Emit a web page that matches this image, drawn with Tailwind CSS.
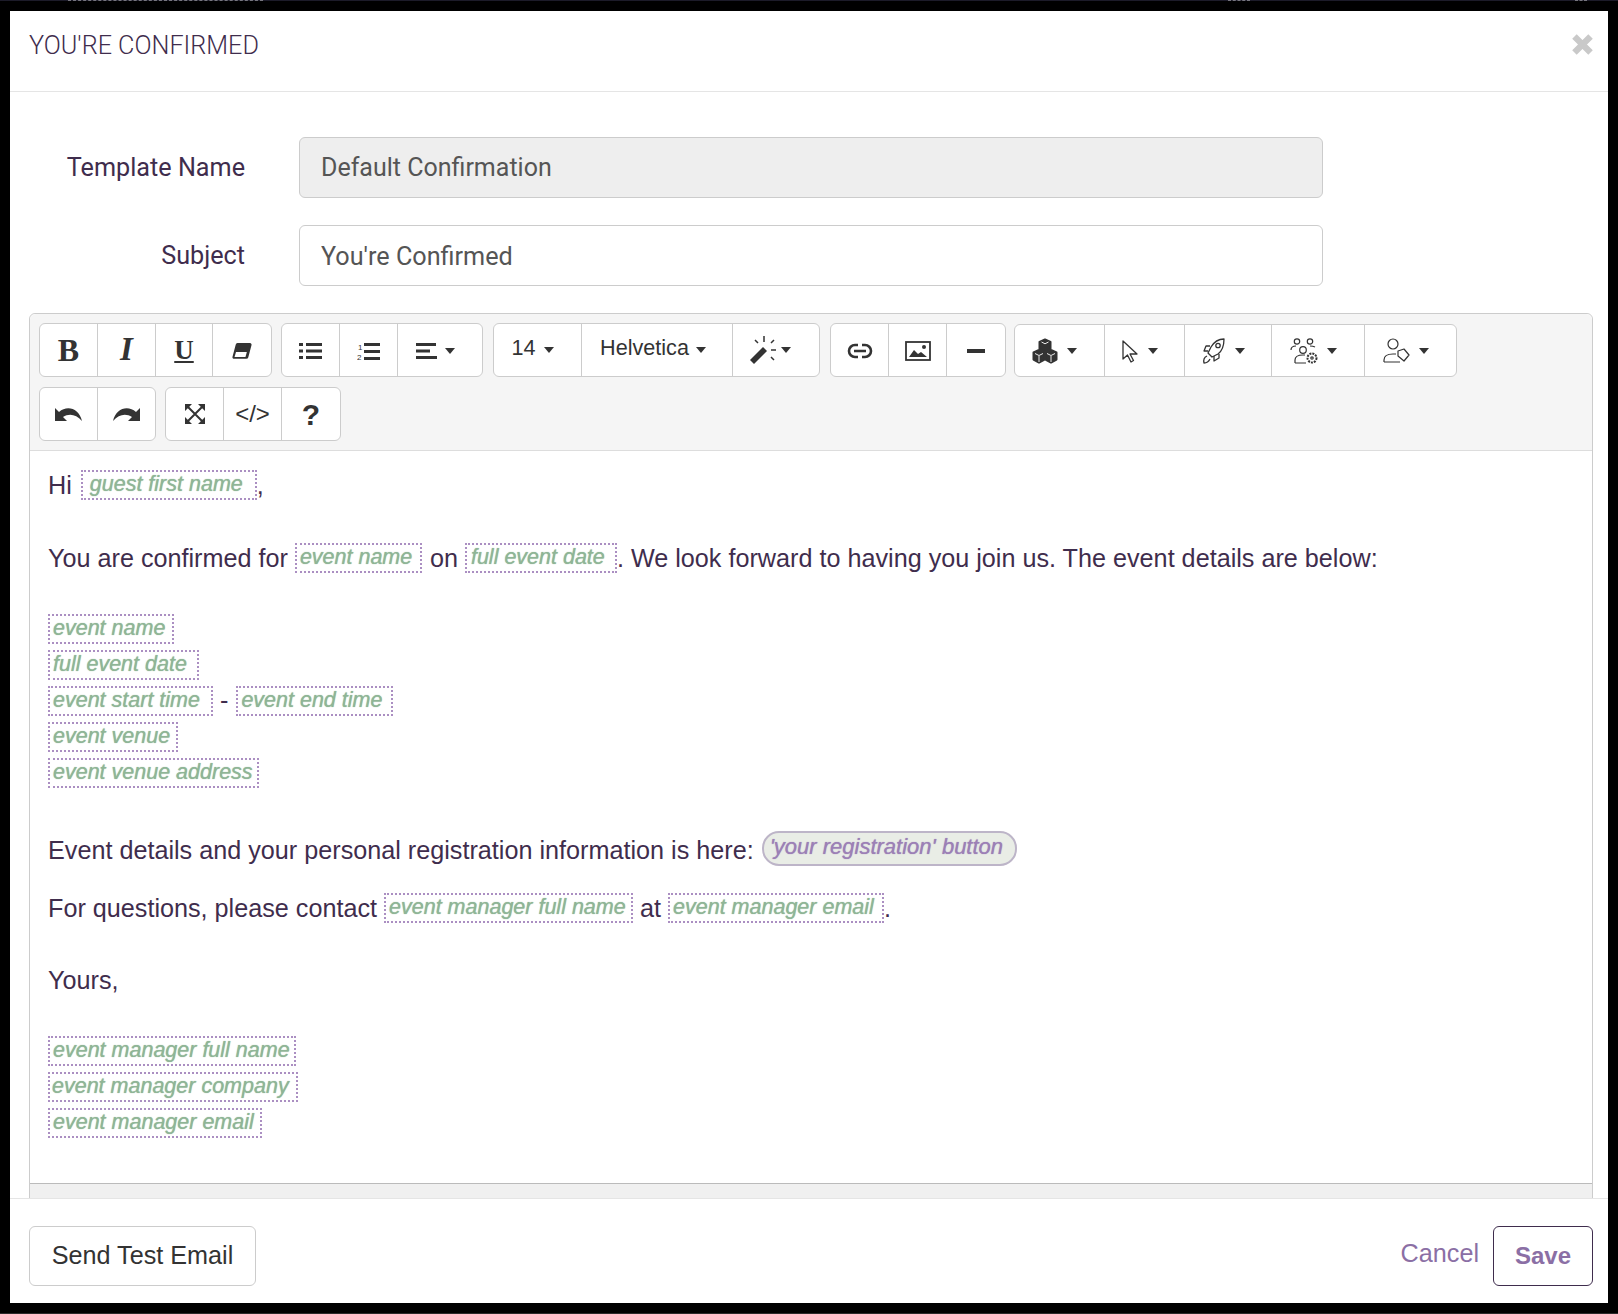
<!DOCTYPE html>
<html lang="en">
<head>
  <meta charset="UTF-8" />
  <title>You're Confirmed</title>
  <script src="https://cdn.jsdelivr.net/npm/@tailwindcss/browser@4"></script>
</head>
<body class="bg-black font-['Liberation_Sans',sans-serif] text-[#3f2d4d]">
  <div class="w-[1618px] h-[1314px] overflow-hidden flex flex-col">
    <!-- page behind the modal, only its last row of pixels shows -->
    <div class="h-[11px] shrink-0">
      <div class="h-px bg-[#1c1b29] flex">
        <span class="ml-[68px] w-[195px] border-t border-dashed border-[#77767f]"></span>
        <span class="ml-[965px] w-[22px] border-t border-dashed border-[#77767f]"></span>
        <span class="ml-[325px] w-[12px] border-t border-dashed border-[#77767f]"></span>
      </div>
    </div>

    <div class="mx-[10px] h-[1292px] shrink-0 bg-white flex flex-col">
      <!-- header -->
      <div class="h-[81px] shrink-0 border-b border-[#e5e5e5] flex items-start justify-between pl-[19px] pr-[14px] pt-[19px]">
        <h4 class="font-['Roboto',sans-serif] font-light text-[25.2px] leading-[32px] text-[#3f2d4d]">YOU'RE CONFIRMED</h4>
        <svg class="w-[23px] h-[23px] mt-[3px]" viewBox="0 0 20 20"><path d="M3 3 17 17M17 3 3 17" stroke="#c9c9c9" stroke-width="5.500" /></svg>
      </div>

      <!-- body -->
      <div class="flex-1 overflow-hidden px-[19px] pt-[45px]">
        <div class="flex items-center h-[61px]">
          <label class="w-[216px] pt-[1px] text-right font-['Roboto',sans-serif] text-[25.2px]">Template Name</label>
          <input value="Default Confirmation" disabled class="ml-[54px] w-[1024px] h-[61px] px-[21px] rounded-[6px] border border-[#ccc] bg-[#eee] text-[#555] text-[25px] font-['Roboto',sans-serif]" />
        </div>
        <div class="flex items-center h-[61px] mt-[27px]">
          <label class="w-[216px] pt-[1px] text-right font-['Roboto',sans-serif] text-[25.2px]">Subject</label>
          <input value="You're Confirmed" class="ml-[54px] w-[1024px] h-[61px] px-[21px] pt-[1px] rounded-[6px] border border-[#ccc] bg-white text-[#555] text-[25.2px] font-['Roboto',sans-serif]" />
        </div>

        <!-- editor -->
        <div class="mt-[27px] w-[1564px] border border-[#ccc] rounded-[6px]">
          <div class="h-[137px] bg-[#f5f5f5] border-b border-[#ddd] rounded-t-[6px] pl-[9px] pt-[9px]">
            <div class="flex gap-[10px] h-[54px] text-[#333]">
              <div class="flex h-[54px] w-[233px] pt-[2px] bg-white border border-[#ccc] rounded-[6px] divide-x divide-[#ccc]">
                <div class="w-[58px] -mt-[2px] flex items-center justify-center"><span class="font-['Liberation_Serif',serif] font-bold text-[32px] text-[#333]">B</span></div>
                <div class="w-[58px] -mt-[2px] flex items-center justify-center"><span class="font-['Liberation_Serif',serif] font-bold italic text-[33px] text-[#333]">I</span></div>
                <div class="w-[57px] -mt-[2px] flex items-center justify-center"><span class="font-['Liberation_Serif',serif] font-bold text-[27px] underline underline-offset-2 text-[#333]">U</span></div>
                <div class="flex-1 -mt-[2px] pt-[2px] flex items-center justify-center">
                  <svg class="w-[20px] h-[19px]" viewBox="0 0 19 18"><path d="M6 1h11a1.500 1.500 0 0 1 1.500 2l-3 11.500a2 2 0 0 1-2 1.500H2a1.500 1.500 0 0 1-1.500-2l3-11.500A2 2 0 0 1 6 1z" fill="#333" /><path d="M3.800 9.500 2.400 14.300h10.400l1.300-4.800z" fill="#fff" /></svg>
                </div>
              </div>
              <div class="flex h-[54px] w-[202px] -ml-[1px] bg-white border border-[#ccc] rounded-[6px] divide-x divide-[#ccc]">
                <div class="w-[58px] pt-[2px] flex items-center justify-center">
                  <svg class="w-[23px] h-[18px]" viewBox="0 0 23 18" fill="#333"><path d="M0 1h4v3H0zM7 1h16v3H7zM0 7.500h4v3H0zM7 7.500h16v3H7zM0 14h4v3H0zM7 14h16v3H7z" /></svg>
                </div>
                <div class="w-[58px] pt-[2px] flex items-center justify-center">
                  <svg class="w-[23px] h-[19px]" viewBox="0 0 23 19" fill="#333"><path d="M7 1h16v3H7zM7 8h16v3H7zM7 15h16v3H7z" /><text x="1" y="8" font-size="8" font-family="Liberation Sans">1</text><text x="0" y="18" font-size="8" font-family="Liberation Sans">2</text></svg>
                </div>
                <div class="flex-1 pt-[2px] flex items-center justify-center gap-[8px] pr-[10px]">
                  <svg class="w-[21px] h-[16px]" viewBox="0 0 21 16" fill="#333"><path d="M0 0h20v3H0zM0 6.500h14v3H0zM0 13h21v3H0z" /></svg>
                  <span class="w-0 h-0 border-x-[5px] border-x-transparent border-t-[6px] border-t-[#333]"></span>
                </div>
              </div>
              <div class="flex h-[54px] w-[327px] bg-white border border-[#ccc] rounded-[6px] divide-x divide-[#ccc] text-[21.6px] text-[#333]">
                <div class="w-[88px] flex items-center justify-center gap-[8px] pr-[10px]"><span class="-mt-[3px]">14</span><span class="w-0 h-0 border-x-[5px] border-x-transparent border-t-[6px] border-t-[#333]"></span></div>
                <div class="w-[151px] flex items-center justify-center gap-[7px] pr-[8px]"><span class="-mt-[3px]">Helvetica</span><span class="w-0 h-0 border-x-[5px] border-x-transparent border-t-[6px] border-t-[#333]"></span></div>
                <div class="flex-1 flex items-center justify-center gap-[2px] pr-[12px]">
                  <svg class="w-[29px] h-[28px]" viewBox="0 0 29 28"><path d="M0 24 13 11l4 4L4 28z" fill="#333" /><path d="M14 0v6M5 4l3 3M24 4l-3 3M21 14h5M21 21l3 3" stroke="#333" stroke-width="1.500" fill="none" /></svg>
                  <span class="w-0 h-0 border-x-[5px] border-x-transparent border-t-[6px] border-t-[#333]"></span>
                </div>
              </div>
              <div class="flex h-[54px] w-[176px] bg-white border border-[#ccc] rounded-[6px] divide-x divide-[#ccc]">
                <div class="w-[58px] pt-[2px] flex items-center justify-center">
                  <svg class="w-[26px] h-[16px]" viewBox="0 0 26 16" fill="none" stroke="#333" stroke-width="2.600"><path d="M11 2H8a6 6 0 0 0 0 12h3M15 2h3a6 6 0 0 1 0 12h-3M7 8h12" /></svg>
                </div>
                <div class="w-[58px] pt-[2px] flex items-center justify-center">
                  <svg class="w-[26px] h-[20px]" viewBox="0 0 26 20"><rect x="1" y="1" width="24" height="18" fill="none" stroke="#333" stroke-width="1.800" /><path d="M4 16l5-7 4 4 3-2 6 5z" fill="#333" /><circle cx="19" cy="6" r="2" fill="#333" /></svg>
                </div>
                <div class="flex-1 pt-[2px] flex items-center justify-center">
                  <span class="w-[18px] h-[4px] bg-[#333]"></span>
                </div>
              </div>
              <div class="flex h-[53px] w-[443px] mt-[1px] -ml-[2px] bg-white border border-[#ccc] rounded-[6px] divide-x divide-[#ccc]">
                <div class="w-[90px] flex items-center justify-center gap-[9px] pr-[10px]">
                  <svg class="w-[26px] h-[26px]" viewBox="0 0 26 26"><path d="M13 1.500l5.500 2.500v7l-5.500 2.500-5.500-2.500V4z M7 12l5.500 2.500v7L7 24.500 1.500 21.500v-7z M19 12l5.500 2.500v7L19 24.500l-5.500-3v-7z" fill="#333" stroke="#333" stroke-width="2" stroke-linejoin="round" /><path d="M9.500 4 13 5.800 16.500 4M7 18v6M19 18v6M3 15.500 7 17.500 11 15.500M15 15.500 19 17.500 23 15.500" stroke="#fff" stroke-width="0.900" fill="none" /></svg>
                  <span class="w-0 h-0 border-x-[5px] border-x-transparent border-t-[6px] border-t-[#333]"></span>
                </div>
                <div class="w-[80px] flex items-center justify-center gap-[9px] pr-[10px]">
                  <svg class="w-[18px] h-[24px]" viewBox="0 0 18 24" fill="none" stroke="#333" stroke-width="1.300" stroke-linejoin="round"><path d="M2 2v18l4.500-4 3.500 7 2.500-1.500L9 15h7z" /></svg>
                  <span class="w-0 h-0 border-x-[5px] border-x-transparent border-t-[6px] border-t-[#333]"></span>
                </div>
                <div class="w-[87px] flex items-center justify-center gap-[9px] pr-[10px]">
                  <svg class="w-[24px] h-[26px]" viewBox="0 0 24 26" fill="none" stroke="#333" stroke-width="1.300" stroke-linejoin="round"><path d="M22 1c-6 0-10 3-13 8l-3 6 4 4 6-3c4-3 6-8 6-15z" /><circle cx="16" cy="7.500" r="2.200" /><path d="M8 8H4L2 13h4M17 16v4l-5 3v-5M5 18c-2 1-4 3-3 7 3 0 5-2 6-4" /></svg>
                  <span class="w-0 h-0 border-x-[5px] border-x-transparent border-t-[6px] border-t-[#333]"></span>
                </div>
                <div class="w-[93px] flex items-center justify-center gap-[9px] pr-[10px]">
                  <svg class="w-[28px] h-[26px]" viewBox="0 0 28 26" fill="none" stroke="#333" stroke-width="1.200"><circle cx="7" cy="3.500" r="2.700" /><circle cx="20" cy="3.500" r="2.700" /><circle cx="13" cy="12" r="3.300" /><path d="M1 12c0-3 2-4 5-4M25 9c-2-1-3-1-5-1M5 25v-3c0-3 3-5 8-5h2M5 25h11" /><circle cx="22" cy="20" r="4.500" stroke-width="2" stroke-dasharray="2 1" /><circle cx="22" cy="20" r="1.200" /></svg>
                  <span class="w-0 h-0 border-x-[5px] border-x-transparent border-t-[6px] border-t-[#333]"></span>
                </div>
                <div class="flex-1 flex items-center justify-center gap-[9px] pr-[10px]">
                  <svg class="w-[27px] h-[25px]" viewBox="0 0 27 25" fill="none" stroke="#333" stroke-width="1.200" stroke-linejoin="round"><circle cx="10" cy="6" r="5" /><path d="M1 24v-2c0-4 4-6 9-6h3M1 24h16" /><path d="M15 13l6-2 5 6-5 6-6-5z" /></svg>
                  <span class="w-0 h-0 border-x-[5px] border-x-transparent border-t-[6px] border-t-[#333]"></span>
                </div>
              </div>
            </div>
            <div class="flex gap-[9px] h-[54px] mt-[10px]">
              <div class="flex w-[117px] bg-white border border-[#ccc] rounded-[6px] divide-x divide-[#ccc]">
                <div class="w-[58px] flex items-center justify-center">
                  <svg class="w-[27px] h-[15px]" viewBox="0 0 27 15" fill="#333"><path d="M0 1v13h12L8 10c6-4 13-3 19 4C24 1 12-2 4 5z" /></svg>
                </div>
                <div class="flex-1 flex items-center justify-center">
                  <svg class="w-[27px] h-[15px]" viewBox="0 0 27 15" fill="#333"><path d="M27 1v13H15l4-4C13 6 6 7 0 14 3 1 15-2 23 5z" /></svg>
                </div>
              </div>
              <div class="flex w-[176px] bg-white border border-[#ccc] rounded-[6px] divide-x divide-[#ccc]">
                <div class="w-[58px] flex items-center justify-center">
                  <svg class="w-[20px] h-[20px]" viewBox="0 0 20 20" fill="#333"><path d="M0 0h7L0 7zM20 0v7L13 0zM0 20v-7l7 7zM20 20h-7l7-7z" /><path d="M3 3 17 17M17 3 3 17" stroke="#333" stroke-width="2" /></svg>
                </div>
                <div class="w-[58px] flex items-center justify-center text-[24px] text-[#333]">&lt;/&gt;</div>
                <div class="flex-1 flex items-center justify-center font-bold text-[30px] text-[#333]">?</div>
              </div>
            </div>
          </div>

          <!-- message -->
          <div class="h-[732px] px-[18px] pt-[17px] text-[25.2px] text-[#3f2d4d] whitespace-nowrap">
            <div class="flex items-center h-[36px]">Hi<span class="ml-[9px] w-[176px] pl-[7px] h-[30px] leading-[25px] -mt-[2px] inline-block border-2 border-dotted border-[#ab8fc2] italic text-[21.5px] text-[#8fb596] [text-shadow:0_0_1px_#8fb596]">guest first name</span>,</div>
            <div class="flex items-center h-[36px] mt-[37px]">You are confirmed for<span class="ml-[7px] w-[127px] pl-[3px] h-[30px] leading-[25px] -mt-[2px] inline-block border-2 border-dotted border-[#ab8fc2] italic text-[21.5px] text-[#8fb596] [text-shadow:0_0_1px_#8fb596]">event name</span><span class="ml-[8px]">on</span><span class="ml-[7px] w-[152px] pl-[4px] h-[30px] leading-[25px] -mt-[2px] inline-block border-2 border-dotted border-[#ab8fc2] italic text-[21.5px] text-[#8fb596] [text-shadow:0_0_1px_#8fb596]">full event date</span>. We look forward to having you join us. The event details are below:</div>
            <div class="flex items-center h-[36px] mt-[34px]"><span class="w-[126px] pl-[3px] h-[30px] leading-[25px] inline-block border-2 border-dotted border-[#ab8fc2] italic text-[21.5px] text-[#8fb596] [text-shadow:0_0_1px_#8fb596]">event name</span></div>
            <div class="flex items-center h-[36px]"><span class="w-[151px] pl-[3px] h-[30px] leading-[25px] inline-block border-2 border-dotted border-[#ab8fc2] italic text-[21.5px] text-[#8fb596] [text-shadow:0_0_1px_#8fb596]">full event date</span></div>
            <div class="flex items-center h-[36px]"><span class="w-[165px] pl-[3px] h-[30px] leading-[25px] inline-block border-2 border-dotted border-[#ab8fc2] italic text-[21.5px] text-[#8fb596] [text-shadow:0_0_1px_#8fb596]">event start time</span><span class="ml-[7px]">-</span><span class="ml-[8px] w-[157px] pl-[3px] h-[30px] leading-[25px] inline-block border-2 border-dotted border-[#ab8fc2] italic text-[21.5px] text-[#8fb596] [text-shadow:0_0_1px_#8fb596]">event end time</span></div>
            <div class="flex items-center h-[36px]"><span class="w-[130px] pl-[3px] h-[30px] leading-[25px] inline-block border-2 border-dotted border-[#ab8fc2] italic text-[21.5px] text-[#8fb596] [text-shadow:0_0_1px_#8fb596]">event venue</span></div>
            <div class="flex items-center h-[36px]"><span class="w-[211px] pl-[3px] h-[30px] leading-[25px] inline-block border-2 border-dotted border-[#ab8fc2] italic text-[21.5px] text-[#8fb596] [text-shadow:0_0_1px_#8fb596]">event venue address</span></div>
            <div class="flex items-center h-[36px] mt-[42px]">Event details and your personal registration information is here:<span class="ml-[8px] w-[255px] pl-[6px] h-[35px] leading-[28px] -mt-[6px] inline-block border-2 border-[#bdb5c8] rounded-[17px] bg-[#e9ede6] italic text-[22px] text-[#9c80b6] [text-shadow:0_0_1px_#9c80b6]">'your registration' button</span></div>
            <div class="flex items-center h-[36px] mt-[22px]">For questions, please contact<span class="ml-[7px] w-[249px] pl-[3px] h-[30px] leading-[25px] -mt-[2px] inline-block border-2 border-dotted border-[#ab8fc2] italic text-[21.5px] text-[#8fb596] [text-shadow:0_0_1px_#8fb596]">event manager full name</span><span class="ml-[7px]">at</span><span class="ml-[7px] w-[216px] pl-[3px] h-[30px] leading-[25px] -mt-[2px] inline-block border-2 border-dotted border-[#ab8fc2] italic text-[21.5px] text-[#8fb596] [text-shadow:0_0_1px_#8fb596]">event manager email</span>.</div>
            <div class="flex items-center h-[36px] mt-[36px]">Yours,</div>
            <div class="flex items-center h-[36px] mt-[34px]"><span class="w-[248px] pl-[3px] h-[30px] leading-[25px] inline-block border-2 border-dotted border-[#ab8fc2] italic text-[21.5px] text-[#8fb596] [text-shadow:0_0_1px_#8fb596]">event manager full name</span></div>
            <div class="flex items-center h-[36px]"><span class="w-[250px] pl-[2px] h-[30px] leading-[25px] inline-block border-2 border-dotted border-[#ab8fc2] italic text-[21.5px] text-[#8fb596] [text-shadow:0_0_1px_#8fb596]">event manager company</span></div>
            <div class="flex items-center h-[36px]"><span class="w-[214px] pl-[3px] h-[30px] leading-[25px] inline-block border-2 border-dotted border-[#ab8fc2] italic text-[21.5px] text-[#8fb596] [text-shadow:0_0_1px_#8fb596]">event manager email</span></div>
          </div>
          <div class="h-[30px] bg-[#f0f0f0] border-t border-[#bbb]"></div>
        </div>
      </div>

      <!-- footer -->
      <div class="h-[105px] shrink-0 border-t border-[#e5e5e5] flex items-start justify-between px-[19px] pr-[15px] pt-[27px]">
        <button class="h-[60px] w-[227px] bg-white border border-[#ccc] rounded-[6px] text-[25.2px] text-[#333]">Send Test Email</button>
        <div class="flex items-start">
          <a class="text-[25.2px] text-[#8b6fa5] mt-[9px] mr-[14px]">Cancel</a>
          <button class="h-[60px] w-[100px] bg-white border border-[#3f2d4d] rounded-[6px] font-bold text-[24px] text-[#8b6fa5]">Save</button>
        </div>
      </div>
    </div>
    <div class="h-[10px] shrink-0"></div>
    <div class="h-px bg-[#2a2a2a]"></div>
  </div>
</body>
</html>
